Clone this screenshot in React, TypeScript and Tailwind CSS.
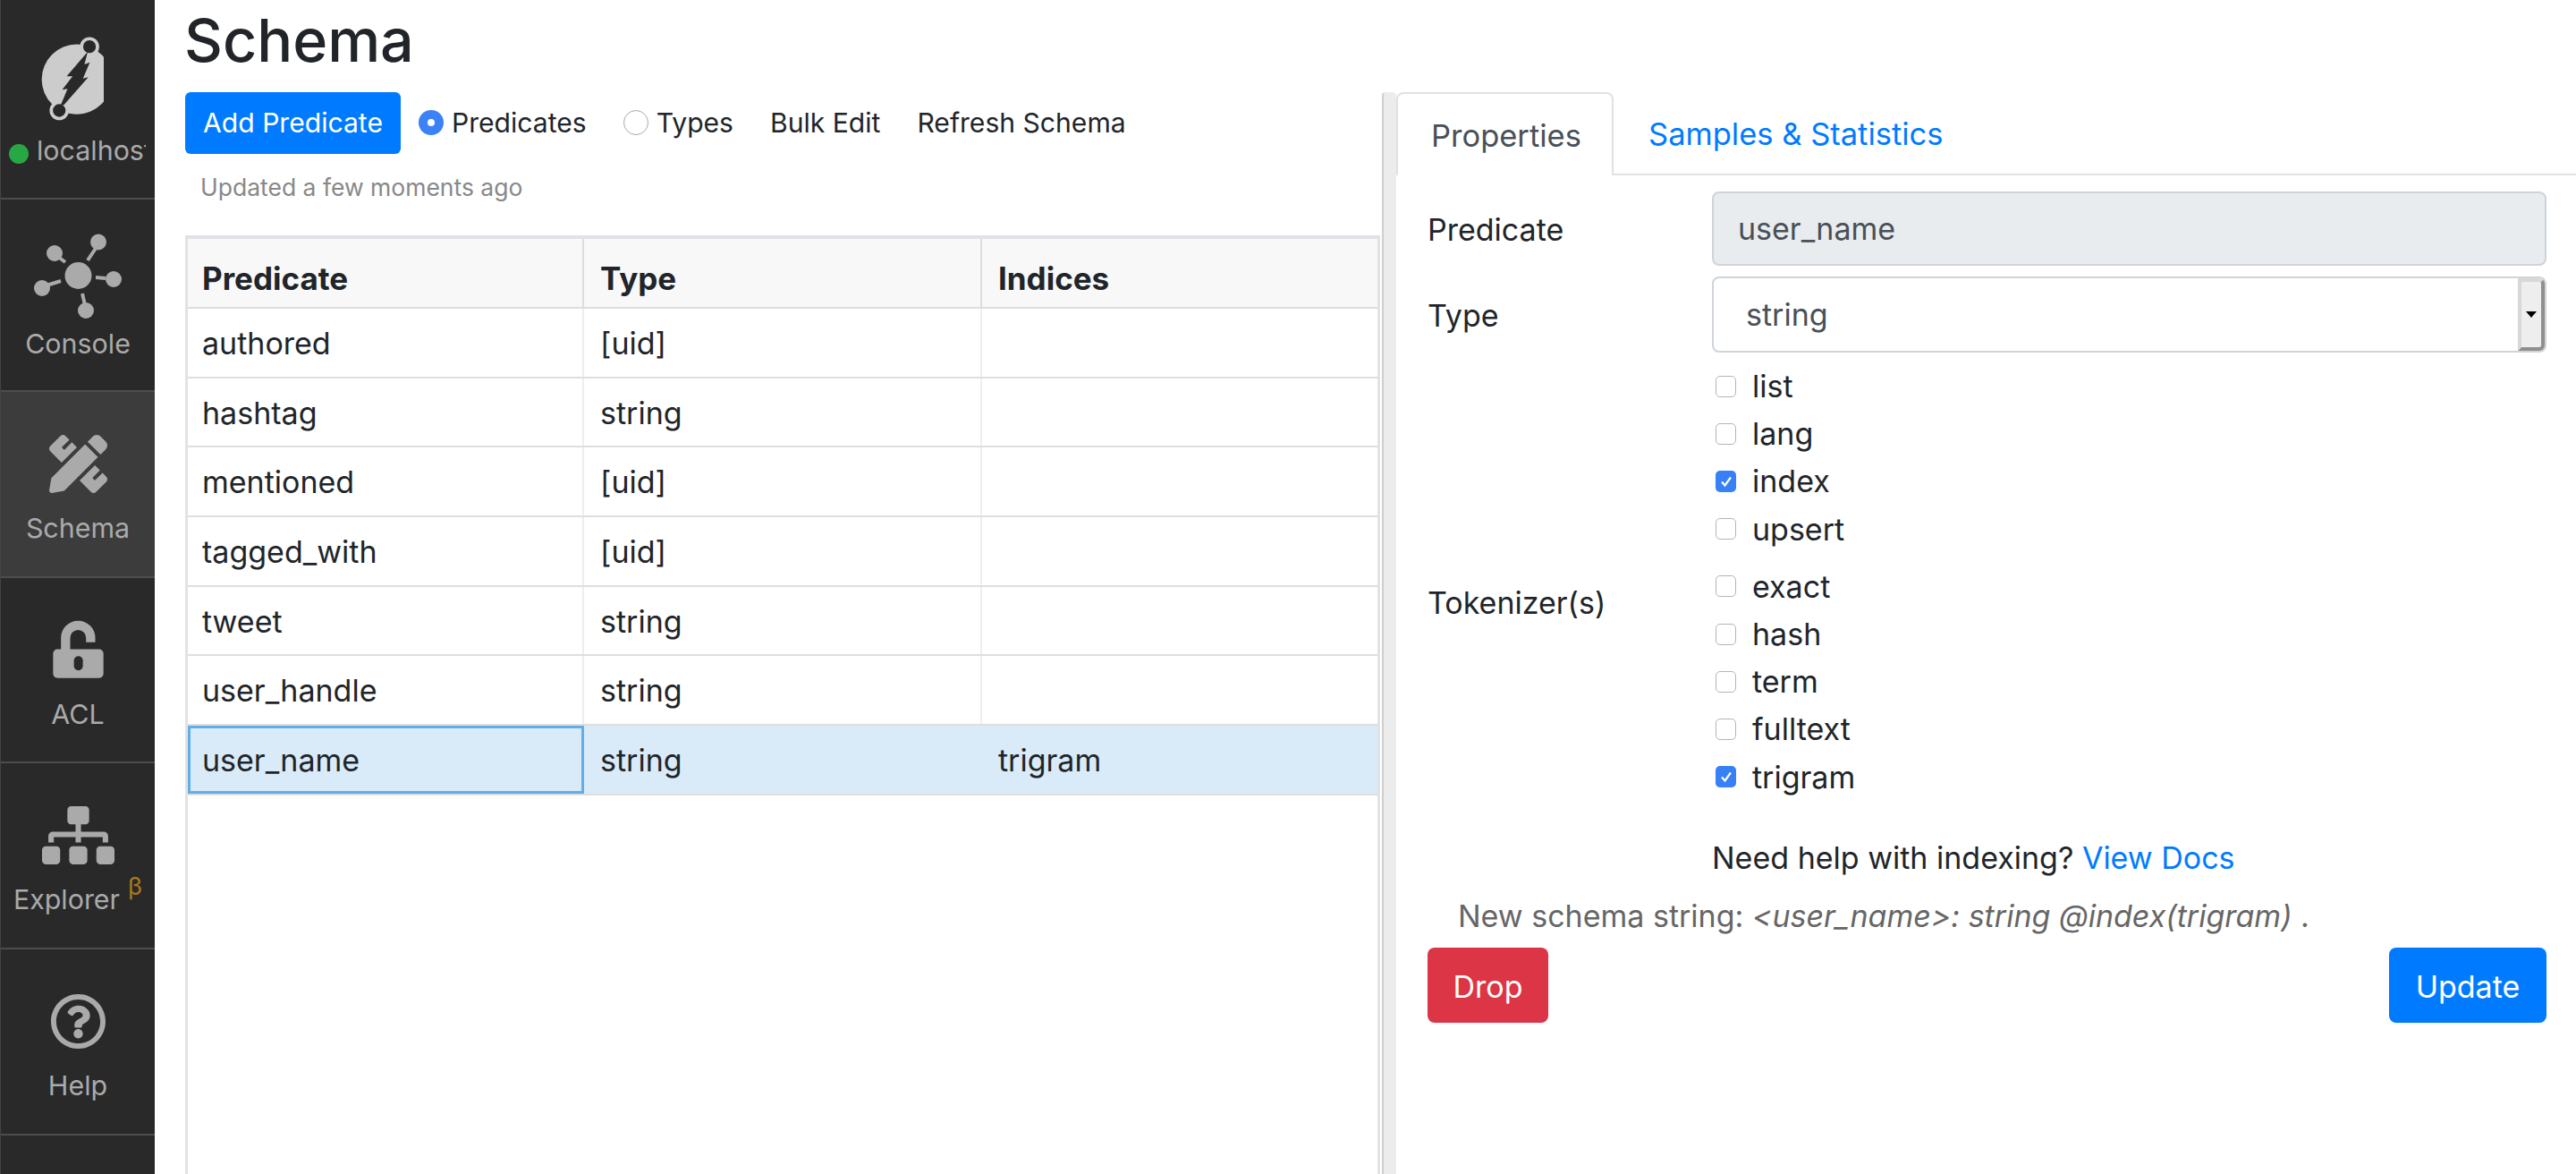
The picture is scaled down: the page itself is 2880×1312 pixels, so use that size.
import { FaPencilRuler, FaSitemap, FaRegQuestionCircle } from 'react-icons/fa'

function DgraphLogo() {
    return (
        <svg viewBox="130 110 220 300" className="w-[73px] h-[100px]">
            <circle cx="259" cy="265" r="118" fill="#cccccc" />
            <circle cx="302" cy="155" r="27" fill="#292929" stroke="#cccccc" strokeWidth="11" />
            <circle cx="200" cy="370" r="27" fill="#292929" stroke="#cccccc" strokeWidth="11" />
            <path d="M296 172L225 255L245 255L210 300L228 297L205 352L215 352L298 258L280 262L303 208L285 215Z" fill="#292929" />
        </svg>
    )
}

function ConsoleIcon() {
    return (
        <svg viewBox="38 262 98 95" className="w-[98px] h-[95px]" fill="#aaaaaa" stroke="#aaaaaa">
            <circle cx="87.5" cy="309" r="15" stroke="none" />
            <circle cx="61" cy="284" r="9" stroke="none" />
            <circle cx="110" cy="271.5" r="9" stroke="none" />
            <circle cx="127" cy="313" r="9" stroke="none" />
            <circle cx="96" cy="348" r="9" stroke="none" />
            <circle cx="47" cy="323" r="9" stroke="none" />
            <path d="M65 288L73 294M108 277L98 292M118 312L107 311M92 329L95 342M68 315L52 320" strokeWidth="4" fill="none" />
        </svg>
    )
}

function LockIcon() {
    return (
        <svg viewBox="170 758 177 200" className="w-[59px] h-[67px]">
            <path d="M216 860V820a42 42 0 0 1 84 0V835" fill="none" stroke="#aaaaaa" strokeWidth="31" />
            <rect x="174" y="858" width="169" height="97" rx="15" fill="#aaaaaa" />
            <rect x="244" y="881" width="30" height="48" rx="15" fill="#292929" />
        </svg>
    )
}

function NavItem({ icon, label, active, beta }: { icon: React.ReactNode; label: string; active?: boolean; beta?: boolean }) {
    return (
        <div className={`h-[207.7px] shrink-0 border-b-2 border-[#4d4d4d] flex flex-col items-center ${active ? 'bg-[#3c3c3c]' : ''}`}>
            <div className="h-[64px] mt-[48px] flex items-center justify-center text-[#aaaaaa]">{icon}</div>
            <div className="mt-[22px] h-[36px] flex text-[30.4px] leading-[36px] text-[#aaaaaa]">
                {label}
                {beta && <span className="ml-[9px] relative top-[-14px] text-[#a9791c] text-[27px]">β</span>}
            </div>
        </div>
    )
}

function Sidebar() {
    return (
        <div className="w-[173px] shrink-0 bg-[#292929] border-l border-[#444444] flex flex-col overflow-hidden">
            <div className="h-[222.5px] shrink-0 border-b-2 border-[#4d4d4d] flex flex-col">
                <div className="mt-[37px] ml-[42px]">
                    <DgraphLogo />
                </div>
                <div className="mt-[13px] flex items-center pl-[9px]">
                    <span className="w-[22px] h-[22px] rounded-full bg-[#28a745] mt-[7px] shrink-0" />
                    <span className="ml-[9px] w-[122px] overflow-hidden text-[30.4px] leading-[36px] text-[#aaaaaa] whitespace-nowrap">localhost</span>
                </div>
            </div>
            <div className="h-[215.5px] shrink-0 border-b-2 border-[#4d4d4d] flex flex-col items-center">
                <div className="mt-[38px]">
                    <ConsoleIcon />
                </div>
                <div className="mt-[10px] text-[30.4px] leading-[36px] text-[#aaaaaa]">Console</div>
            </div>
            <NavItem active icon={<FaPencilRuler className="w-[65px] h-[65px]" />} label="Schema" />
            <NavItem icon={<LockIcon />} label="ACL" />
            <NavItem beta icon={<FaSitemap className="w-[81px] h-[65px]" />} label="Explorer" />
            <NavItem icon={<FaRegQuestionCircle className="w-[63px] h-[63px]" />} label="Help" />
        </div>
    )
}

const rows = [
    ['authored', '[uid]', ''],
    ['hashtag', 'string', ''],
    ['mentioned', '[uid]', ''],
    ['tagged_with', '[uid]', ''],
    ['tweet', 'string', ''],
    ['user_handle', 'string', ''],
    ['user_name', 'string', 'trigram'],
]

function SchemaTable() {
    return (
        <div className="flex-1 border-[3px] border-b-0 border-t-4 border-[#e0e3e6] text-[34px] text-[#212529]">
            <div className="grid grid-cols-[443px_445px_1fr] h-[78px] bg-[#f8f8f8] border-b-2 border-[#dddddd] text-[35px] font-bold">
                <div className="border-r-2 border-[#dddddd] pl-[16px] flex items-center pt-[12px]">Predicate</div>
                <div className="border-r-2 border-[#dddddd] pl-[18px] flex items-center pt-[12px]">Type</div>
                <div className="pl-[18px] flex items-center pt-[12px]">Indices</div>
            </div>
            {rows.map((row, i) => {
                const selected = i === rows.length - 1
                return (
                    <div
                        key={row[0]}
                        className={`grid grid-cols-[443px_445px_1fr] h-[77.7px] border-b-2 border-[#dedede] ${selected ? 'bg-[#d9ebf9]' : ''}`}
                    >
                        <div className={`flex items-center pt-[1px] ${selected ? 'border-[3px] border-[#63ade8] pl-[13px]' : 'pl-[16px] border-r-2 border-[#eeeeee]'}`}>{row[0]}</div>
                        <div className={`border-r-2 pl-[18px] pt-[1px] flex items-center ${selected ? 'border-[#d9ebf9]' : 'border-[#eeeeee]'}`}>{row[1]}</div>
                        <div className="pl-[18px] pt-[1px] flex items-center">{row[2]}</div>
                    </div>
                )
            })}
        </div>
    )
}

function Radio({ checked, label }: { checked?: boolean; label: string }) {
    return (
        <div className="flex items-center">
            {checked ? (
                <span className="w-[28px] h-[28px] rounded-full bg-[#3b82f6] flex items-center justify-center">
                    <span className="w-[8px] h-[8px] rounded-full bg-white" />
                </span>
            ) : (
                <span className="w-[28px] h-[28px] rounded-full border border-[#aaaaaa] bg-white" />
            )}
            <span className="ml-[9px]">{label}</span>
        </div>
    )
}

function Check({ checked, label }: { checked?: boolean; label: string }) {
    return (
        <div className="h-[53.2px] flex items-center text-[34px] text-[#212529]">
            {checked ? (
                <span className="ml-[4px] w-[23px] h-[24px] rounded-[5px] bg-[#3880f6] flex items-center justify-center">
                    <svg viewBox="0 0 16 16" className="w-[16px] h-[16px]" fill="none" stroke="#ffffff" strokeWidth="2.2">
                        <path d="M3 8.5L6.5 12.5L13 3.5" />
                    </svg>
                </span>
            ) : (
                <span className="ml-[4px] w-[23px] h-[24px] rounded-[5px] border border-[#b5b5b5] bg-white" />
            )}
            <span className="ml-[18px]">{label}</span>
        </div>
    )
}

function PropertiesPane() {
    return (
        <div className="flex-1 flex flex-col text-[34px] text-[#212529]">
            <div className="h-[93px] shrink-0 flex border-b-2 border-[#dee2e6] text-[34.5px]">
                <div className="w-[243px] h-[93px] bg-white border-2 border-b-0 border-[#dee2e6] rounded-t-lg pl-[37px] pt-[2px] flex items-center text-[#495057]">Properties</div>
                <div className="pl-[39px] pt-[2px] flex items-center text-[#007bff]">Samples &amp; Statistics</div>
            </div>
            <div className="pl-[35px] pr-[33px] pt-[18px]">
                <div className="grid grid-cols-[318px_1fr] gap-y-[12px]">
                    <div className="flex items-center pt-[2px]">Predicate</div>
                    <div className="h-[83px] bg-[#e9ecef] border-2 border-[#ced4da] rounded-lg pl-[27px] flex items-center text-[#495057]">user_name</div>
                    <div className="flex items-center pt-[2px]">Type</div>
                    <div className="h-[85px] relative bg-white border-2 border-[#ced4da] rounded-lg pl-[36px] flex items-center text-[#495057]">
                        string
                        <div className="absolute right-0 top-0 bottom-0 w-[30px] bg-[#eeeeee] border-t-4 border-l-4 border-r-4 border-b-4 border-t-[#d8d8d8] border-l-[#d8d8d8] border-r-[#8f8f8f] border-b-[#8f8f8f] rounded-r-md flex items-center justify-center">
                            <span className="w-0 h-0 border-x-[6px] border-x-transparent border-t-[7px] border-t-black" />
                        </div>
                    </div>
                </div>
                <div className="grid grid-cols-[318px_1fr] mt-[11px]">
                    <div />
                    <div>
                        <Check label="list" />
                        <Check label="lang" />
                        <Check checked label="index" />
                        <Check label="upsert" />
                    </div>
                </div>
                <div className="grid grid-cols-[318px_1fr] mt-[11px]">
                    <div className="pt-[19px]">Tokenizer(s)</div>
                    <div>
                        <Check label="exact" />
                        <Check label="hash" />
                        <Check label="term" />
                        <Check label="fulltext" />
                        <Check checked label="trigram" />
                    </div>
                </div>
                <div className="mt-[40px] ml-[318px] leading-[48px]">
                    Need help with indexing? <span className="text-[#007bff]">View Docs</span>
                </div>
                <div className="mt-[17px] ml-[34px] leading-[48px] text-[#666666]">
                    New schema string: <em>&lt;user_name&gt;: string @index(trigram)</em> .
                </div>
                <div className="mt-[11px] flex justify-between">
                    <button className="w-[135px] h-[84px] pt-[3px] rounded-lg bg-[#dc3545] text-white">Drop</button>
                    <button className="w-[176px] h-[84px] pt-[3px] rounded-lg bg-[#007bff] text-white">Update</button>
                </div>
            </div>
        </div>
    )
}

export default function App() {
    return (
        <div className="w-[2880px] h-[1312px] flex overflow-hidden bg-white font-['Inter',sans-serif]">
            <Sidebar />
            <div className="flex-1 flex flex-col min-w-0">
                <div className="h-[103px] shrink-0 pl-[33px] pb-[11px] flex items-center text-[66.4px] font-medium text-[#212529]">Schema</div>
                <div className="flex-1 flex min-h-0">
                    <div className="w-[1372px] shrink-0 pl-[34px] pr-[2px] flex flex-col">
                        <div className="h-[69px] shrink-0 flex items-center text-[30.1px] text-[#212529]">
                            <button className="w-[241px] h-[69px] rounded-md bg-[#007bff] text-white">Add Predicate</button>
                            <div className="ml-[20px]">
                                <Radio checked label="Predicates" />
                            </div>
                            <div className="ml-[41px]">
                                <Radio label="Types" />
                            </div>
                            <div className="ml-[41px]">Bulk Edit</div>
                            <div className="ml-[41px]">Refresh Schema</div>
                        </div>
                        <div className="h-[91px] shrink-0 pl-[17px] pt-[18px] text-[26.5px] text-[#888888]">Updated a few moments ago</div>
                        <SchemaTable />
                    </div>
                    <div className="w-[16px] shrink-0 bg-[#ececec] border-l-2 border-[#cfcfcf] rounded-t-sm" />
                    <PropertiesPane />
                </div>
            </div>
        </div>
    )
}
